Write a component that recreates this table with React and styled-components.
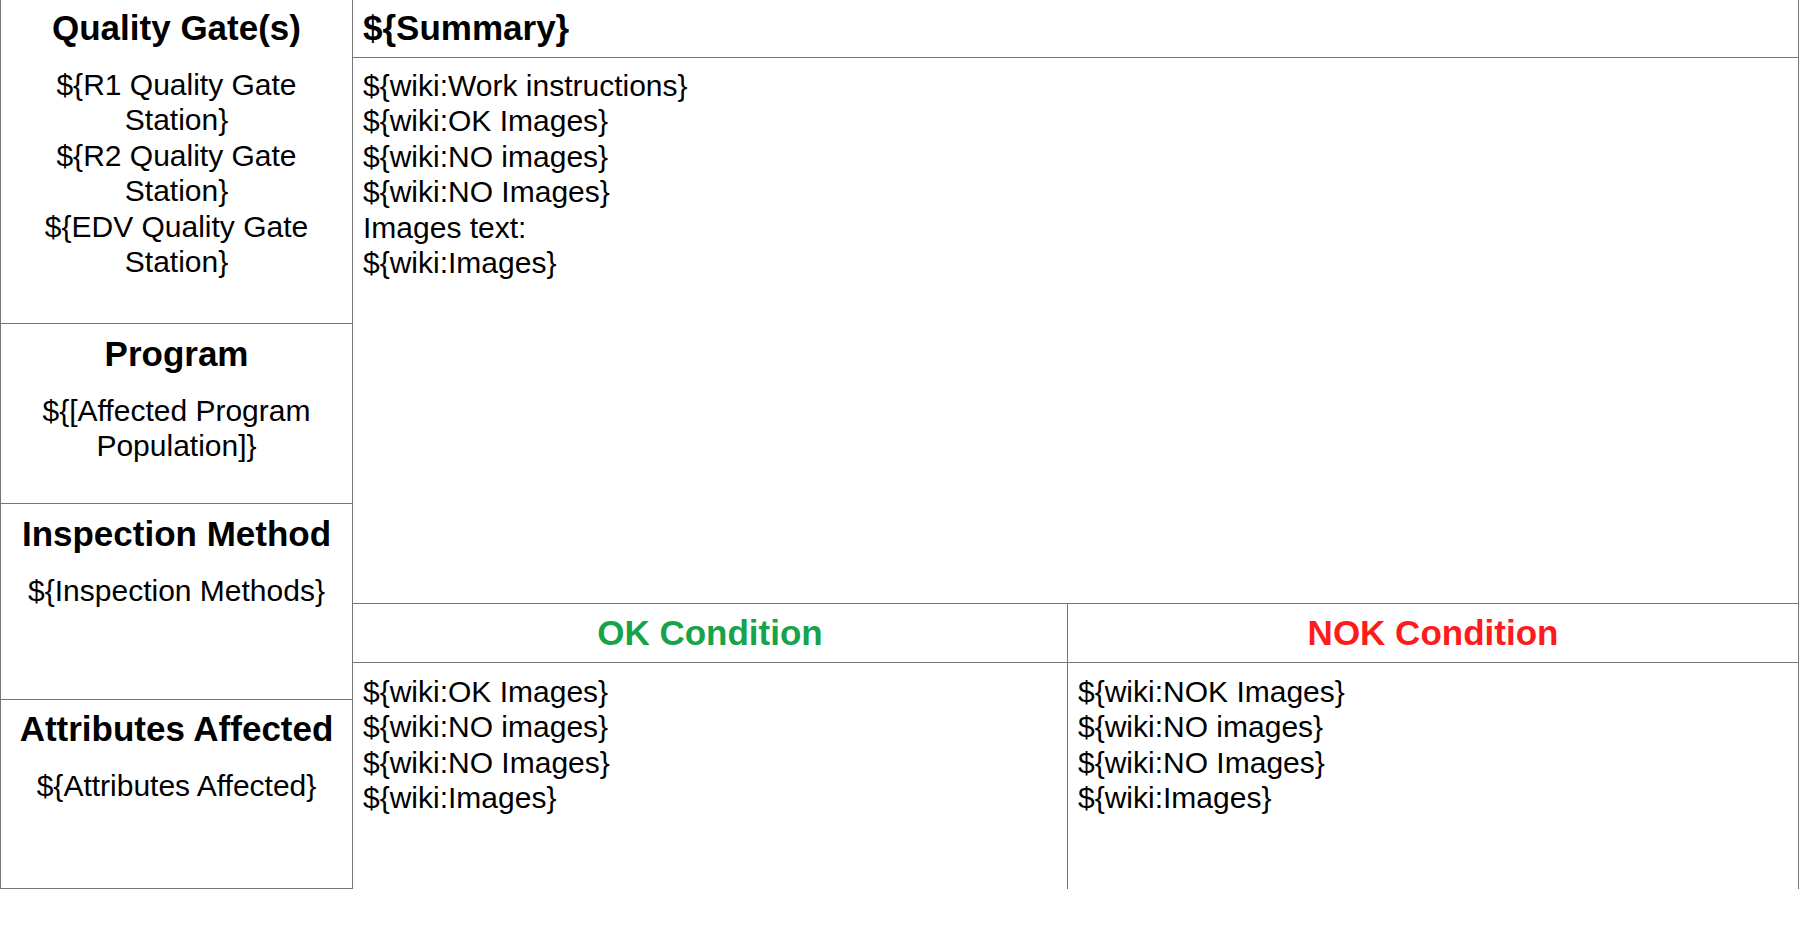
import React from "react";
import styled, { createGlobalStyle } from "styled-components";

const Global = createGlobalStyle`
  html, body { margin: 0; padding: 0; background: #fff; }
  body { font-family: "Liberation Sans", Arial, Helvetica, sans-serif; color: #000; }
`;

const LINE = "#777";

const Sheet = styled.div`
  display: grid;
  grid-template-columns: 353px 1fr;
  width: 1799px;
  height: 889px;
`;

const SideColumn = styled.div`
  display: flex;
  flex-direction: column;
  border-left: 1px solid ${LINE};
  border-right: 1px solid ${LINE};
  border-bottom: 1px solid ${LINE};
`;

const SideCell = styled.section`
  height: ${(p) => p.$h}px;
  box-sizing: border-box;
  padding-top: ${(p) => p.$pt}px;
  border-top: ${(p) => (p.$first ? "none" : `1px solid ${LINE}`)};
  text-align: center;
`;

const SideTitle = styled.h2`
  margin: 0 0 19px;
  font-size: 35px;
  line-height: 40px;
  font-weight: 700;
`;

const Body = styled.div`
  font-size: 30px;
  line-height: 35.4px;
`;

const MainColumn = styled.div`
  display: grid;
  grid-template-rows: 58px 545px 60px 1fr;
  border-right: 1px solid ${LINE};
`;

const SummaryHead = styled.div`
  border-bottom: 1px solid ${LINE};
  padding: 8px 10px 0;
  font-size: 35px;
  line-height: 40px;
  font-weight: 700;
`;

const SummaryBody = styled(Body)`
  padding: 10px 10px 0;
`;

const Split = styled.div`
  display: grid;
  grid-template-columns: 714px 1fr;
  border-top: ${(p) => (p.$head ? `1px solid ${LINE}` : "none")};
  border-bottom: ${(p) => (p.$head ? `1px solid ${LINE}` : "none")};
`;

const CondTitle = styled.div`
  display: flex;
  align-items: center;
  justify-content: center;
  font-size: 35px;
  font-weight: 700;
  color: ${(p) => p.$color};
  border-left: ${(p) => (p.$divided ? `1px solid ${LINE}` : "none")};
`;

const CondBody = styled(Body)`
  padding: 11px 10px 0;
  border-left: ${(p) => (p.$divided ? `1px solid ${LINE}` : "none")};
`;

const Lines = ({ items }) => items.map((t, i) => <div key={i}>{t}</div>);

export default function App() {
  return (
    <>
      <Global />
      <Sheet>
        <SideColumn>
          <SideCell $first $h={323} $pt={8}>
            <SideTitle>Quality Gate(s)</SideTitle>
            <Body>
              <div>{"${R1 Quality Gate"}</div>
              <div>{"Station}"}</div>
              <div>{"${R2 Quality Gate"}</div>
              <div>{"Station}"}</div>
              <div>{"${EDV Quality Gate"}</div>
              <div>{"Station}"}</div>
            </Body>
          </SideCell>
          <SideCell $h={180} $pt={10}>
            <SideTitle>Program</SideTitle>
            <Body>
              <div>{"${[Affected Program"}</div>
              <div>{"Population]}"}</div>
            </Body>
          </SideCell>
          <SideCell $h={196} $pt={10}>
            <SideTitle>Inspection Method</SideTitle>
            <Body>{"${Inspection Methods}"}</Body>
          </SideCell>
          <SideCell $h={189} $pt={9}>
            <SideTitle>Attributes Affected</SideTitle>
            <Body>{"${Attributes Affected}"}</Body>
          </SideCell>
        </SideColumn>
        <MainColumn>
          <SummaryHead>{"${Summary}"}</SummaryHead>
          <SummaryBody>
            <Lines
              items={[
                "${wiki:Work instructions}",
                "${wiki:OK Images}",
                "${wiki:NO images}",
                "${wiki:NO Images}",
                "Images text:",
                "${wiki:Images}",
              ]}
            />
          </SummaryBody>
          <Split $head>
            <CondTitle $color="#16a34b">OK Condition</CondTitle>
            <CondTitle $color="#ff1b1b" $divided>
              NOK Condition
            </CondTitle>
          </Split>
          <Split>
            <CondBody>
              <Lines
                items={[
                  "${wiki:OK Images}",
                  "${wiki:NO images}",
                  "${wiki:NO Images}",
                  "${wiki:Images}",
                ]}
              />
            </CondBody>
            <CondBody $divided>
              <Lines
                items={[
                  "${wiki:NOK Images}",
                  "${wiki:NO images}",
                  "${wiki:NO Images}",
                  "${wiki:Images}",
                ]}
              />
            </CondBody>
          </Split>
        </MainColumn>
      </Sheet>
    </>
  );
}
